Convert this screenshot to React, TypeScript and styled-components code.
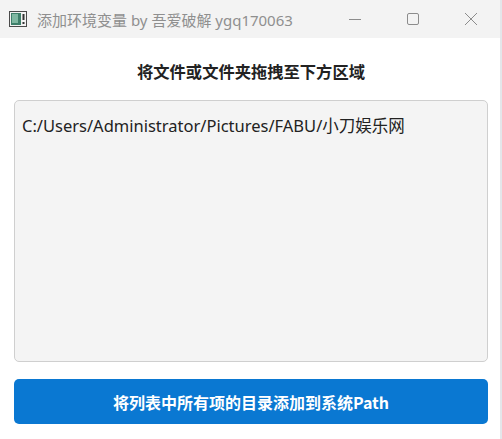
import React from "react";
import styled, { createGlobalStyle } from "styled-components";

const Global = createGlobalStyle`
  html, body { margin: 0; padding: 0; background: #ffffff; }
  body { font-family: "Noto Sans", "Noto Sans CJK SC", sans-serif; }
  #root { width: 502px; height: 439px; }
`;

const Window = styled.div`
  width: 502px;
  height: 439px;
  display: flex;
  flex-direction: column;
  background: #ffffff;
  box-sizing: border-box;
  border-right: 2px solid #e4e6ea;
  overflow: hidden;
`;

const TitleBar = styled.div`
  height: 38px;
  flex: none;
  display: flex;
  align-items: center;
  background: #f3f3f3;
`;

const AppIcon = styled.div`
  width: 18px;
  height: 16px;
  margin-left: 9px;
  margin-right: 10px;
  display: flex;
`;

const Title = styled.div`
  flex: 1;
  font-size: 15px;
  color: #8f8f8f;
  white-space: nowrap;
  font-family: "Noto Sans", "Noto Sans CJK SC", sans-serif;
`;

const CtrlButton = styled.div`
  width: 58px;
  height: 38px;
  display: flex;
  align-items: center;
  justify-content: center;
  color: #8c8c8c;
`;

const Content = styled.div`
  flex: 1;
  display: flex;
  flex-direction: column;
  padding: 20px 12px 13px 14px;
`;

const Heading = styled.div`
  text-align: center;
  font-size: 16.3px;
  font-weight: 700;
  color: #222;
  line-height: 26px;
  font-family: "Noto Sans CJK SC", sans-serif;
`;

const DropArea = styled.div`
  margin-top: 16px;
  height: 262px;
  box-sizing: border-box;
  background: #f4f4f4;
  border: 1px solid #cfcfcf;
  border-radius: 5px;
  padding: 13px 7px;
`;

const PathItem = styled.div`
  font-size: 16.5px;
  color: #222;
  line-height: 24px;
  font-family: "Noto Sans", "Noto Sans CJK SC", sans-serif;
`;

const ActionButton = styled.button`
  margin-top: 17px;
  height: 45px;
  width: 100%;
  border: none;
  border-radius: 5px;
  background: #0a78d2;
  color: #ffffff;
  font-size: 16px;
  font-weight: 700;
  font-family: "Noto Sans CJK SC", sans-serif;
  display: flex;
  align-items: center;
  justify-content: center;
  padding: 0;
`;

export default function App() {
  return (
    <>
      <Global />
      <Window>
        <TitleBar>
          <AppIcon>
            <svg width="18" height="16" viewBox="0 0 18 16">
              <rect x="0.5" y="0.5" width="17" height="15" fill="#f2f2f2" stroke="#4a4a4a" />
              <rect x="2" y="2" width="10" height="12" fill="#3e7f6a" />
              <rect x="3" y="3" width="6" height="9" fill="#7fb8a2" />
              <rect x="13.5" y="3" width="2" height="6" fill="#333" />
              <rect x="13.5" y="11" width="2" height="2" fill="#333" />
            </svg>
          </AppIcon>
          <Title>添加环境变量 by 吾爱破解 ygq170063</Title>
          <CtrlButton>
            <svg width="12" height="12" viewBox="0 0 12 12">
              <line x1="0" y1="6.5" x2="12" y2="6.5" stroke="currentColor" strokeWidth="1" />
            </svg>
          </CtrlButton>
          <CtrlButton>
            <svg width="12" height="12" viewBox="0 0 12 12">
              <rect x="0.5" y="0.5" width="11" height="11" rx="1.5" fill="none" stroke="currentColor" strokeWidth="1" />
            </svg>
          </CtrlButton>
          <CtrlButton>
            <svg width="14" height="14" viewBox="0 0 14 14">
              <path d="M1 1 L13 13 M13 1 L1 13" stroke="currentColor" strokeWidth="1" />
            </svg>
          </CtrlButton>
        </TitleBar>
        <Content>
          <Heading>将文件或文件夹拖拽至下方区域</Heading>
          <DropArea>
            <PathItem>C:/Users/Administrator/Pictures/FABU/小刀娱乐网</PathItem>
          </DropArea>
          <ActionButton>将列表中所有项的目录添加到系统Path</ActionButton>
        </Content>
      </Window>
    </>
  );
}
